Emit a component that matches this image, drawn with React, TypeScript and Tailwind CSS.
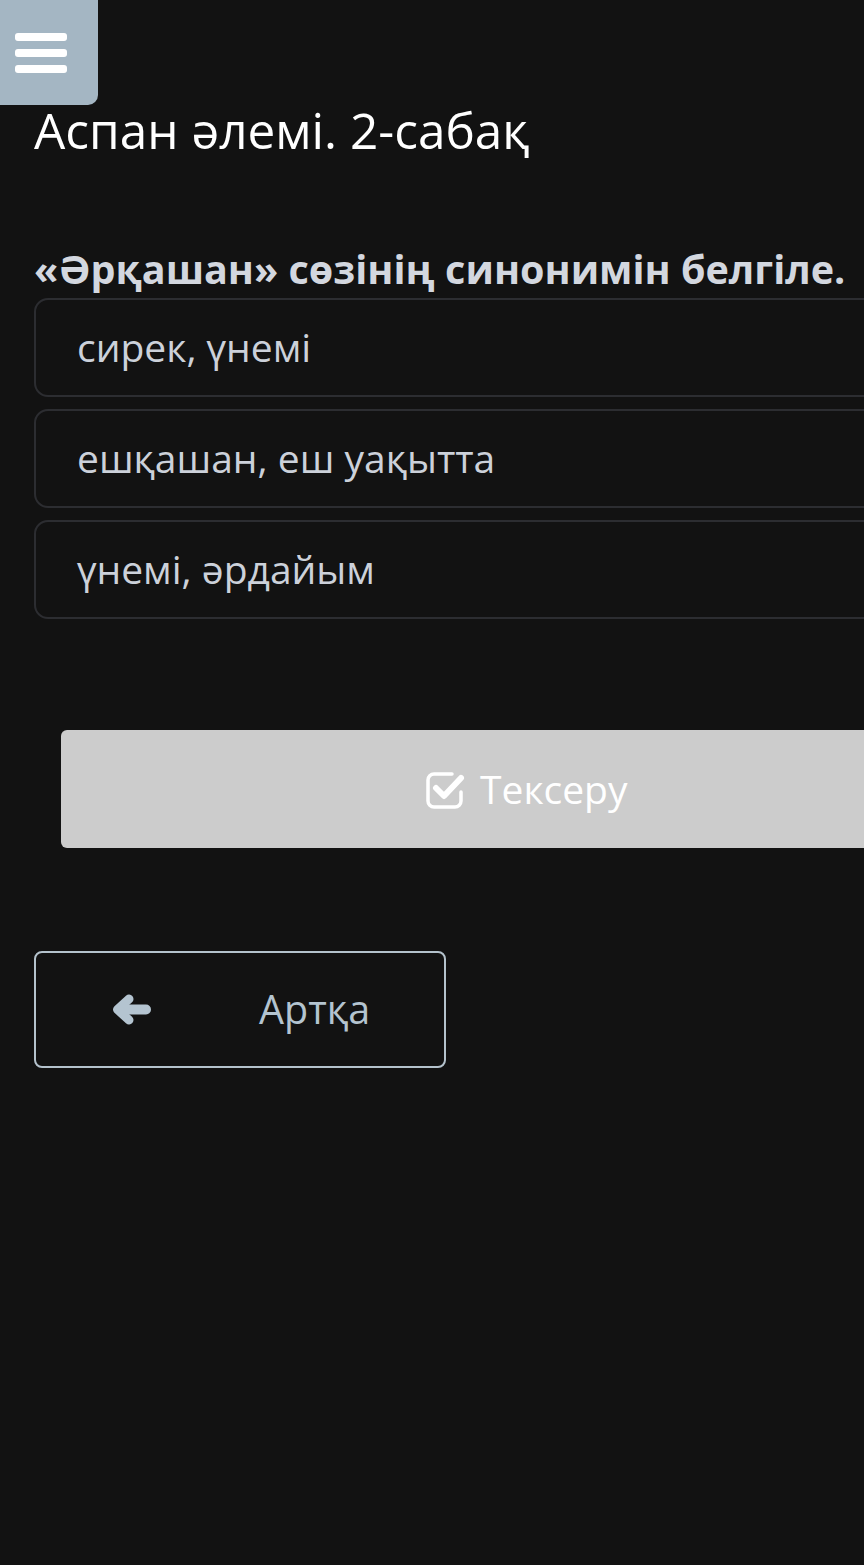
import React from "react";

function CheckSquareIcon() {
  return (
    <svg viewBox="0 0 40 40" className="h-[40px] w-[40px]" fill="none" stroke="white">
      <path
        d="M27 5 H9 a6 6 0 0 0 -6 6 v21 a6 6 0 0 0 6 6 h21 a6 6 0 0 0 6 -6 v-9"
        strokeWidth="3.5"
        strokeLinecap="round"
      />
      <path d="M11 19 L19 27 L36 9" strokeWidth="6" strokeLinecap="round" strokeLinejoin="round" />
    </svg>
  );
}

function ArrowLeftIcon() {
  return (
    <svg viewBox="0 0 39 31" className="h-[31px] w-[39px]" fill="none" stroke="#b4c4d0">
      <polyline points="17,5 5.5,15.5 17,26" strokeWidth="9" strokeLinecap="round" strokeLinejoin="round" />
      <line x1="8" y1="15.5" x2="34" y2="15.5" strokeWidth="10" strokeLinecap="round" />
    </svg>
  );
}

export default function App() {
  const options = ["сирек, үнемі", "ешқашан, еш уақытта", "үнемі, әрдайым"];
  return (
    <div
      className="min-h-[1565px] w-full overflow-hidden bg-[#121212]"
      style={{ fontFamily: '"Open Sans", "Noto Sans", sans-serif' }}
    >
      <div className="flex h-[105px] w-[98px] flex-col justify-center gap-[8px] rounded-br-[10px] bg-[#a4b6c3] pl-[15px]">
        <div className="h-[8px] w-[52px] rounded-[3px] bg-white" />
        <div className="h-[8px] w-[52px] rounded-[3px] bg-white" />
        <div className="h-[8px] w-[52px] rounded-[3px] bg-white" />
      </div>
      <div className="pl-[34px]">
        <h1 className="-mt-[5px] whitespace-nowrap text-[49.5px] leading-[60px] text-white">Аспан әлемі. 2-сабақ</h1>
        <p className="mt-[87px] whitespace-nowrap text-[39.5px] font-bold leading-[44px] text-[#d3d7df]">
          «Әрқашан» сөзінің синонимін белгіле.
        </p>
        <div className="mt-[7px] flex w-[900px] flex-col gap-[12px]">
          {options.map((o) => (
            <div
              key={o}
              className="flex h-[99px] items-center rounded-[14px] border-2 border-[#2c2d31] pl-[41px] text-[39px] text-[#ccd1da]"
            >
              {o}
            </div>
          ))}
        </div>
        <div className="ml-[27px] mt-[111px] flex h-[118px] w-[900px] items-center rounded-[6px] bg-[#cccccc] pl-[364px] text-white">
          <CheckSquareIcon />
          <span className="ml-[15px] text-[39px]">Тексеру</span>
        </div>
        <div className="mt-[103px] flex h-[117px] w-[412px] items-center rounded-[8px] border-2 border-[#b4c2cc] text-[#b4c4d0]">
          <span className="ml-[76px] flex">
            <ArrowLeftIcon />
          </span>
          <span className="ml-[108px] text-[39.5px]">Артқа</span>
        </div>
      </div>
    </div>
  );
}
